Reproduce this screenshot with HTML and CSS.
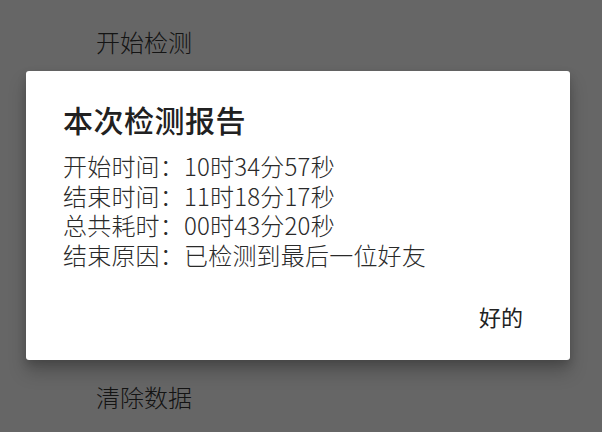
FILE: index.html
```html
<!DOCTYPE html>
<html lang="zh">
<head>
<meta charset="utf-8">
<link rel="stylesheet" href="styles.css">
</head>
<body>
<div class="screen">
  <div class="list">
    <div class="item">开始检测</div>
    <div class="spacer"></div>
    <div class="item">清除数据</div>
  </div>
  <div class="scrim"></div>
  <div class="dialog">
    <h1 class="title">本次检测报告</h1>
    <div class="message">
      <div class="line">开始时间：10时34分57秒</div>
      <div class="line">结束时间：11时18分17秒</div>
      <div class="line">总共耗时：00时43分20秒</div>
      <div class="line">结束原因：已检测到最后一位好友</div>
    </div>
    <div class="actions">
      <span class="btn">好的</span>
    </div>
  </div>
</div>
</body>
</html>
```
FILE: styles.css
```css
html, body {
  margin: 0;
  padding: 0;
}
body {
  width: 602px;
  height: 432px;
  overflow: hidden;
  font-family: "Noto Sans CJK SC", "Noto Sans", sans-serif;
}
.screen {
  position: relative;
  width: 602px;
  height: 432px;
  background: #ffffff;
}
.list {
  display: flex;
  flex-direction: column;
  padding: 26px 0 0 96px;
}
.item {
  font-size: 24px;
  line-height: 32px;
  font-weight: 300;
  color: #333;
}
.spacer {
  height: 323px;
}
.scrim {
  position: absolute;
  inset: 0;
  background: rgba(0, 0, 0, 0.6);
}
.dialog {
  position: absolute;
  left: 26px;
  top: 71px;
  width: 544px;
  height: 289px;
  box-sizing: border-box;
  background: #fff;
  border-radius: 3px;
  box-shadow: 0 12px 18px rgba(0, 0, 0, 0.22), 0 4px 8px rgba(0, 0, 0, 0.15);
  padding: 28px 37px 0 37px;
  display: flex;
  flex-direction: column;
}
.title {
  margin: 0;
  font-size: 30px;
  font-weight: 500;
  line-height: 40px;
  color: #212121;
  letter-spacing: 0.5px;
}
.message {
  margin-top: 12px;
  display: flex;
  flex-direction: column;
}
.line {
  font-size: 24px;
  line-height: 29.5px;
  font-weight: 300;
  color: #2a2a2a;
  letter-spacing: 0.2px;
}
.actions {
  display: flex;
  justify-content: flex-end;
  margin-top: 32px;
  padding-right: 10px;
}
.btn {
  font-size: 22px;
  line-height: 30px;
  color: #222;
  font-weight: 400;
}
```
